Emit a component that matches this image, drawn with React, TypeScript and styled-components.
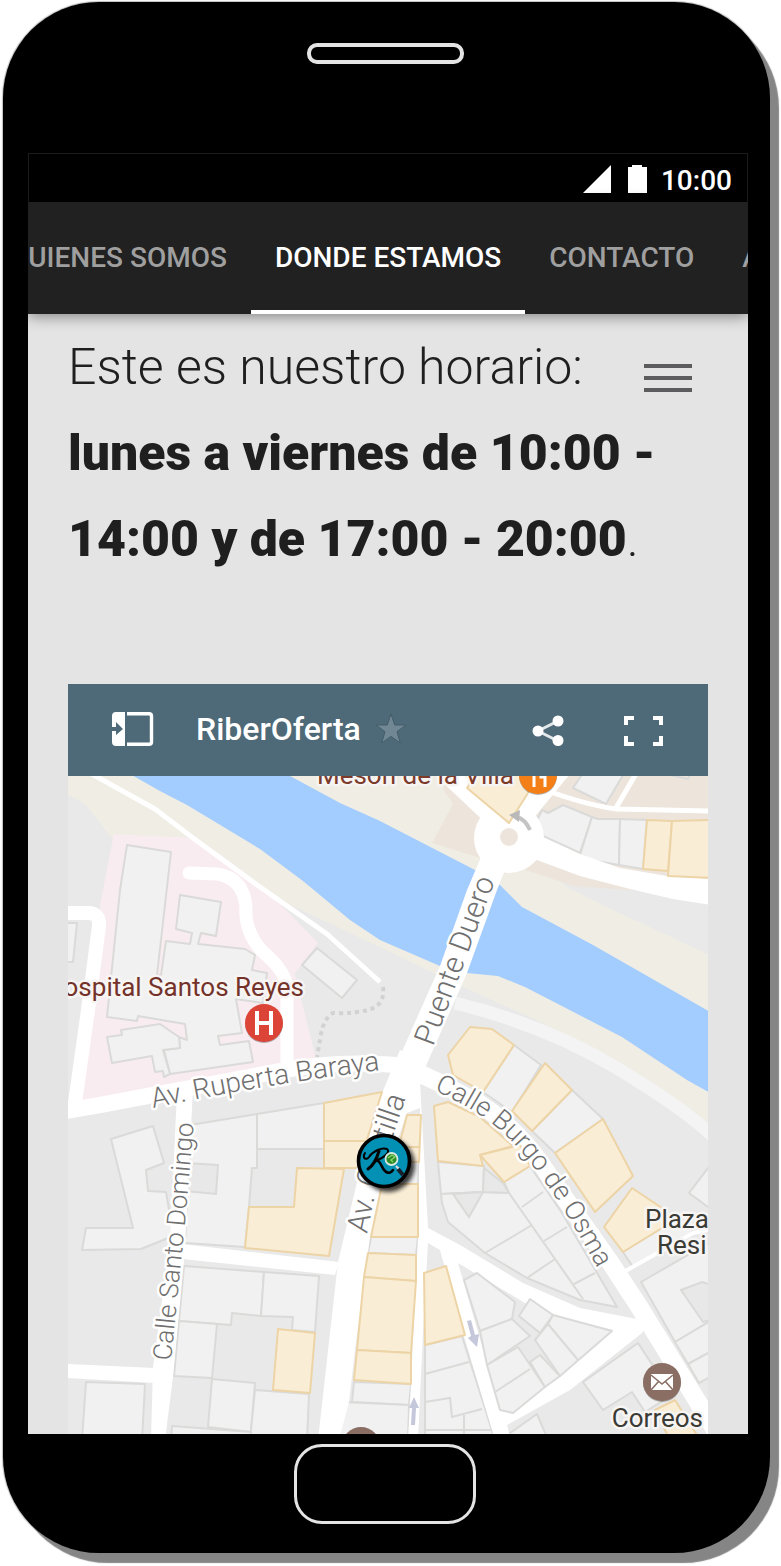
import React from "react";
import styled, { createGlobalStyle } from "styled-components";

const GlobalStyle = createGlobalStyle`
  body {
    margin: 0;
    background: #ffffff;
    font-family: Roboto, "Liberation Sans", sans-serif;
  }
`;

const Phone = styled.div`
  display: flex;
  flex-direction: column;
  align-items: center;
  margin: 2px 11px 0 3px;
  padding: 0 22px 0 25px;
  border-radius: 96px;
  background: #000000;
  box-shadow: 9px 10px 1px #858585, 0 0 1px 1px #bdbdbd;
`;

const Page = styled.div`
  padding-bottom: 13px;
`;

const Speaker = styled.div`
  box-sizing: border-box;
  width: 157px;
  height: 21px;
  margin: 41px 6px 89px 0;
  border: 4px solid #e4e4e4;
  border-radius: 10px;
`;

const HomeButton = styled.button`
  width: 182px;
  height: 80px;
  margin: 10px 6px 29px 0;
  padding: 0;
  border: 3px solid #e4e4e4;
  border-radius: 28px;
  background: #000000;
`;

const Screen = styled.div`
  align-self: stretch;
  display: flex;
  flex-direction: column;
  overflow: hidden;
  background: #e4e4e4;
`;

const StatusBar = styled.div`
  display: flex;
  align-items: center;
  justify-content: flex-end;
  gap: 14px;
  box-sizing: border-box;
  height: 49px;
  padding: 4px 15px 0 0;
  border: 1px solid #1c1c1c;
  border-bottom: 0;
  background: #000000;
  color: #ffffff;
  font-size: 28px;
  font-weight: 500;
`;

const Tabs = styled.nav`
  position: relative;
  display: flex;
  height: 112px;
  background: #212121;
  box-shadow: 0 2px 14px rgba(0, 0, 0, 0.45);
`;

const TabTrack = styled.div`
  display: flex;
  margin-left: -43px;
`;

const Tab = styled.a<{ $active?: boolean }>`
  display: flex;
  align-items: center;
  box-sizing: border-box;
  padding: 2px 24px 0;
  border-bottom: 4px solid ${(p) => (p.$active ? "#ffffff" : "transparent")};
  color: ${(p) => (p.$active ? "#ffffff" : "#9f9f9f")};
  font-size: 28px;
  font-weight: 500;
  white-space: nowrap;
  text-decoration: none;
`;

const Content = styled.main`
  position: relative;
  display: flex;
  flex-direction: column;
  gap: 102px;
  padding: 10px 40px 0;
`;

const Schedule = styled.p`
  margin: 0;
  color: #1f1f1f;
  font-size: 50px;
  font-weight: 300;
  line-height: 86px;

  strong {
    font-weight: 900;
  }
`;

const MenuButton = styled.button`
  position: absolute;
  top: 50px;
  right: 56px;
  display: flex;
  flex-direction: column;
  gap: 8px;
  width: 48px;
  padding: 0;
  border: 0;
  background: none;
`;

const MenuBar = styled.span`
  height: 4px;
  background: #5c5b5d;
`;

const MapCard = styled.section`
  display: flex;
  flex-direction: column;
`;

const MapHeader = styled.header`
  display: flex;
  align-items: center;
  box-sizing: border-box;
  height: 92px;
  padding: 0 45px 2px 44px;
  background: #4e6a78;
  color: #ffffff;
`;

const MapTitle = styled.h2`
  margin: 0 14px 0 42px;
  font-size: 32px;
  font-weight: 500;
`;

const IconButton = styled.button<{ $push?: boolean; $gap?: number }>`
  display: flex;
  margin-left: ${(p) => (p.$push ? "auto" : `${p.$gap ?? 0}px`)};
  padding: 0;
  border: 0;
  background: none;
  color: inherit;
`;

const MapView = styled.svg`
  display: block;
  width: 100%;
  height: auto;

  text {
    font-family: Roboto, "Liberation Sans", sans-serif;
    paint-order: stroke;
    stroke-linejoin: round;
    stroke-width: 5px;
  }
`;

const StreetName = styled.text<{ $size: number }>`
  font-size: ${(p) => p.$size}px;
`;

const PlaceName = styled.text`
  font-size: 26px;
`;

const GREY = [
  "127,845 171,852 157,975 161,975 166,941 190,944 192,933 176,929 180,895 221,902 216,936 201,933 198,944 245,949 255,955 252,970 267,973 263,1003 236,999 242,1033 218,1036 220,1045 249,1041 253,1062 170,1074 164,1050 180,1048 179,1037 187,1040 185,1024 138,1016 137,1021 107,1017 120,890",
  "107,1037 122,1035 121,1030 160,1024 179,1037 180,1048 163,1050 170,1074 164,1077 163,1071 155,1072 152,1056 112,1063",
  "317,948 357,980 342,998 302,965",
  "60,923 77,923 73,962 60,962",
  "111,1139 153,1126 164,1163 146,1170 148,1191 166,1192 173,1233 168,1238 141,1249 82,1250 86,1228 133,1228",
  "190,1125 257,1114 257,1168 252,1168 249,1207 245,1247 185,1243",
  "257,1114 324,1103 324,1149 257,1149",
  "184,1266 264,1272 261,1316 232,1313 231,1325 179,1321",
  "264,1272 319,1276 315,1332 292,1330 293,1317 261,1316",
  "179,1321 217,1324 212,1378 174,1376",
  "212,1379 255,1383 251,1432 208,1427",
  "255,1390 309,1394 307,1440 250,1440",
  "172,1426 251,1432 251,1440 171,1440",
  "86,1382 145,1384 142,1440 82,1440",
  "398,1162 419,1162 418,1184 398,1184",
  "371,1237 418,1237 416,1255 368,1253",
  "354,1382 411,1384 409,1405 352,1402",
  "343,1402 409,1405 408,1440 339,1440",
  "514,1045 541,1065 512,1112 483,1092",
  "572,1090 603,1119 555,1153 532,1131",
  "623,1252 662,1228 690,1227 693,1232 633,1267",
  "712,1163 689,1193 712,1210",
  "641,1282 712,1241 712,1320 675,1342",
  "675,1342 712,1320 712,1351 688,1364",
  "688,1364 712,1351 712,1376 699,1383",
  "438,1162 484,1166 483,1192 441,1194",
  "441,1194 483,1192 509,1193 504,1182 530,1166 562,1213 617,1307 580,1300 527,1278 485,1253 448,1222 442,1203",
  "425,1345 462,1336 495,1440 425,1440",
  "583,1382 638,1343 672,1395 645,1412 632,1392 603,1410",
  "506,1436 537,1414 548,1440",
  "532,831 542,810 548,813 563,805 592,817 580,853",
  "592,817 598,819 620,819 619,865 579,858",
  "620,819 647,820 643,869 619,865",
  "573,788 585,770 626,770 606,804",
];

/* the wedge of houses between the two converging streets */
const WEDGE = [
  "464,1280 477,1273 515,1302 512,1319 480,1331",
  "480,1331 512,1319 530,1336 487,1365",
  "487,1365 518,1347 545,1387 513,1413 500,1410",
  "530,1362 540,1355 560,1376 545,1387",
  "519,1316 530,1299 553,1315 540,1333",
  "548,1324 553,1315 612,1331 560,1376 535,1340",
];

const COURTYARDS = [
  "185,1163 218,1165 216,1194 185,1191",
  "453,1194 483,1192 469,1217",
  "484,1168 503,1183 509,1193 483,1192",
  "681,1290 702,1282 712,1285 712,1320 703,1322",
];

const YELLOW = [
  "324,1103 382,1092 358,1168 324,1168",
  "297,1168 344,1169 329,1256 245,1248 249,1207 294,1207",
  "278,1329 315,1333 310,1393 273,1390",
  "407,1115 421,1115 419,1162 395,1162",
  "382,1184 418,1184 418,1237 371,1237",
  "368,1253 416,1255 416,1281 364,1277",
  "364,1277 416,1281 411,1353 357,1350",
  "357,1350 411,1353 411,1384 354,1380",
  "470,1027 492,1029 514,1045 483,1092 453,1075 448,1055",
  "545,1063 572,1090 532,1131 512,1111",
  "603,1119 633,1176 595,1212 555,1153",
  "632,1188 665,1210 662,1228 623,1252 604,1227",
  "434,1106 448,1102 480,1117 513,1146 480,1155 483,1166 438,1161",
  "480,1155 520,1145 530,1166 504,1182",
  "424,1273 446,1266 465,1335 425,1345",
  "675,1400 655,1410 670,1440 700,1440",
  "467,788 478,770 536,770 528,793 509,823",
  "647,820 672,821 668,871 643,869",
  "672,821 712,820 712,878 668,876",
];

const WHITE_ROADS = [
  "482,855 467,890 440,966 400,1056 425,1068 467,973 497,890 505,870",
  "400,1050 380,1098 358,1178 338,1262 318,1440 339,1440 349,1402 355,1350 370,1237 382,1184 407,1113 420,1108 418,1237 411,1383 408,1440 418,1440 423,1333 428,1243 440,1250 463,1333 495,1440 511,1440 507,1425 570,1390 642,1333 650,1320 637,1319 580,1308 523,1283 490,1263 460,1245 428,1228 421,1100 420,1080 425,1062",
  "177,1092 193,1088 187,1210 184,1260 173,1377 165,1440 151,1440 153,1367 170,1243",
  "182,1244 339,1262 335,1275 182,1259",
  "66,1364 155,1368 155,1383 66,1378",
  "530,831 580,854 620,868 667,876 712,879 712,905 673,899 630,889 580,876 537,860 520,868",
];

const LINES = [
  "509,1193 583,1299",
  "522,1207 543,1192",
  "485,1253 532,1225",
  "544,1241 567,1227",
  "527,1278 555,1259",
  "574,1284 595,1273",
  "425,1374 469,1362",
  "425,1402 450,1398 452,1417 482,1409",
  "464,1415 464,1440",
  "425,1430 493,1430",
  "670,775 688,779 690,775",
];

const RIVER =
  "290,776 340,803 380,821 475,870 498,883 522,907 593,945 712,1013 712,1094 687,1080 622,1037 525,987 498,976 467,973 440,966 380,940 350,920 303,881 260,849 187,805 160,791 130,774";

const StreetMap = () => (
  <MapView viewBox="68 776 640 658" role="img" aria-label="Mapa de RiberOferta">
    <defs>
      <path id="ruperta" d="M153 1108 Q265 1084 390 1069" />
      <path id="puente" d="M433 1047 L502 862" />
      <path id="domingo" d="M171 1361 L185 1223 L195 1110" />
      <path id="castilla" d="M367 1234 L378 1180 L418 1062" />
      <path id="burgo" d="M434 1090 C470 1107 495 1122 518 1148 C550 1185 575 1225 608 1288" />
      <filter id="soft" x="-30%" y="-30%" width="160%" height="160%">
        <feGaussianBlur stdDeviation="2" />
      </filter>
    </defs>

    {/* ground, banks and river */}
    <rect x="68" y="776" width="640" height="658" fill="#e9e9e9" />
    <polygon
      fill="#efede4"
      points="60,770 450,770 537,861 567,887 613,910 712,956 712,1130 623,1070 547,1025 458,985 390,952 310,914 240,882 187,850 113,839 85,804 60,790"
    />
    <polygon fill="#ede5db" points="450,770 443,789 453,804 432,843 480,858 523,869 573,886 613,889 712,895 712,770" />
    <polygon fill="#a3ccff" points={RIVER} />
    <polygon
      fill="#f9ecf0"
      stroke="#f9ecf0"
      strokeWidth="3"
      strokeLinejoin="round"
      points="115,836 187,839 240,873 280,906 316,943 293,973 314,1057 83,1102 102,903"
    />
    <path d="M455 1003 Q545 1025 615 1067 T715 1138" fill="none" stroke="#f4f4f4" strokeWidth="13" />

    {/* buildings */}
    <g fill="#f1f1f1" stroke="#dadad9" strokeWidth="2" strokeLinejoin="round">
      {GREY.map((p) => (
        <polygon key={p} points={p} />
      ))}
    </g>
    <g fill="#e8e8e8" stroke="#dadad9" strokeWidth="2">
      {COURTYARDS.map((p) => (
        <polygon key={p} points={p} />
      ))}
    </g>
    <g fill="none" stroke="#dadad9" strokeWidth="2">
      {LINES.map((p) => (
        <polyline key={p} points={p} />
      ))}
    </g>

    {/* roads */}
    <g fill="#ffffff">
      {WHITE_ROADS.map((p) => (
        <polygon key={p} points={p} />
      ))}
      <circle cx="509" cy="838" r="35" />
    </g>
    <polygon fill="#e9e9e9" points="458,1263 525,1303 557,1316 613,1330 545,1387 513,1413 500,1410 487,1363" />
    <g fill="#f1f1f1" stroke="#dadad9" strokeWidth="2" strokeLinejoin="round">
      {WEDGE.map((p) => (
        <polygon key={p} points={p} />
      ))}
      <polyline fill="none" points="495,1392 530,1369" />
      <polyline fill="none" points="548,1324 578,1360" />
    </g>
    <g fill="none" stroke="#ffffff" strokeLinejoin="round">
      <path d="M60 1112 L100 1105 L280 1071 Q340 1059 410 1066" strokeWidth="16" />
      <path d="M60 913 H88 Q100 913 99 926 L88 1010 L74 1110" strokeWidth="14" />
      <path d="M189 873 L217 874 Q243 878 246 906 Q244 932 263 952 Q287 972 287 990 V1070" strokeWidth="13" strokeLinecap="round" />
      <path d="M90 773 L155 809 L193 838 L260 887 L327 934 L380 982" strokeWidth="5" />
      <path d="M412 1070 L440 1083 L480 1104 Q522 1132 552 1180 L610 1262 L640 1308 L720 1438" strokeWidth="18" />
      <path d="M442 768 L495 818" strokeWidth="20" />
      <path d="M515 825 L562 768" strokeWidth="20" />
      <path d="M545 790 Q590 806 617 809 L712 811 M637 772 L616 808" strokeWidth="5" />
      <path d="M622 1273 L693 1233 L712 1229" strokeWidth="4" />
    </g>
    <g fill="#f9edd6" stroke="#edd4a6" strokeWidth="2" strokeLinejoin="round">
      {YELLOW.map((p) => (
        <polygon key={p} points={p} />
      ))}
      <path fill="none" d="M324 1141 H368 M400 1147 H420" />
    </g>
    <circle cx="509" cy="837" r="9" fill="#ede5db" />
    <path
      d="M383 987 Q385 1004 371 1009 Q356 1014 333 1013 Q324 1018 321 1034 L317 1057"
      fill="none"
      stroke="#d2d2d2"
      strokeWidth="4"
      strokeDasharray="4 4"
    />

    {/* one-way arrows */}
    <path d="M530 830 Q525 819 517 817" fill="none" stroke="#c4c4c4" strokeWidth="4" />
    <polygon fill="#b9b9b9" points="509,815 520,810 519,822" />
    <g fill="#c5c8db">
      <polygon points="467,1321 471,1320 475,1335 479,1334 477,1347 468,1338 471,1336" />
      <polygon points="411,1425 415,1425 416,1408 419,1408 414,1397 409,1408 412,1408" />
    </g>

    {/* street names */}
    <g fill="#707070" stroke="#ffffff" fontWeight="300">
      <StreetName $size={28}><textPath href="#ruperta">Av. Ruperta Baraya</textPath></StreetName>
      <StreetName $size={30}><textPath href="#puente">Puente Duero</textPath></StreetName>
      <StreetName $size={26}><textPath href="#domingo">Calle Santo Domingo</textPath></StreetName>
      <StreetName $size={30}><textPath href="#castilla">Av. Castilla</textPath></StreetName>
      <StreetName $size={27}><textPath href="#burgo">Calle Burgo de Osma</textPath></StreetName>
    </g>

    {/* places */}
    <g stroke="#f7f5f3">
      <PlaceName x="304" y="996" textAnchor="end" fill="#74332a">Hospital Santos Reyes</PlaceName>
      <PlaceName x="514" y="784" textAnchor="end" fill="#7c3a2b">Mesón de la Villa</PlaceName>
      <PlaceName x="645" y="1228" fill="#3b3b36">Plaza</PlaceName>
      <PlaceName x="657" y="1254" fill="#3b3b36">Resi</PlaceName>
      <PlaceName x="703" y="1427" textAnchor="end" fill="#3b3b36">Correos</PlaceName>
    </g>
    <g fill="#000000" opacity="0.3">
      <circle cx="264" cy="1024" r="19" />
      <circle cx="538" cy="776" r="19" />
      <circle cx="662" cy="1383" r="19" />
    </g>
    <circle cx="264" cy="1023" r="19" fill="#dc4437" />
    <path d="M257 1011 V1035 M271 1011 V1035 M257 1023 H271" stroke="#ffffff" strokeWidth="4" fill="none" />
    <circle cx="538" cy="775" r="19" fill="#f57f17" />
    <path d="M534 787 V770 M545 787 V777 H541 V770" stroke="#ffffff" strokeWidth="3" fill="none" />
    <circle cx="662" cy="1382" r="19" fill="#8b6e63" />
    <rect x="651" y="1374" width="22" height="16" fill="#ffffff" />
    <path d="M651 1375 L662 1384 L673 1375 M651 1390 L659 1381 M673 1390 L665 1381" stroke="#8b6e63" strokeWidth="1.6" fill="none" />
    <circle cx="361" cy="1446" r="19" fill="#8b6e63" />

    {/* shop marker */}
    <circle cx="388" cy="1165" r="27" fill="#000000" opacity="0.75" filter="url(#soft)" />
    <circle cx="384" cy="1161" r="25.5" fill="#0290b5" stroke="#000000" strokeWidth="3.6" />
    <g fill="none" stroke="#000000" strokeLinecap="round" strokeLinejoin="round">
      <path d="M365 1153 C362 1158 366 1161 369 1157 C373 1151 382 1147 387 1149 C391 1152 384 1158 375 1161" strokeWidth="2" />
      <path d="M379 1151 C377 1158 374 1165 368 1169" strokeWidth="3" />
      <path d="M375 1161 C381 1159 381 1168 385 1171 C388 1174 391 1173 393 1170" strokeWidth="2.6" />
    </g>
    <path d="M396 1166 L399 1169" stroke="#d8d8d8" strokeWidth="2.4" />
    <path d="M398 1169 L403 1175" stroke="#17202a" strokeWidth="4" />
    <circle cx="391.5" cy="1159" r="6" fill="#2c8b28" stroke="#d9e8df" strokeWidth="1.8" />
    <path d="M388 1158 L392 1155 L395 1157 L391 1160 L393 1162" fill="none" stroke="#8ad36b" strokeWidth="1.4" />
  </MapView>
);

export default function App() {
  return (
    <Page>
      <GlobalStyle />
      <Phone>
        <Speaker />
        <Screen>
          <StatusBar>
            <svg width="64" height="30" viewBox="0 0 64 30" fill="#ffffff" aria-hidden="true">
              <path d="M28 0 V28 H0 Z" />
              <path d="M45 2 H49 V0 H59 V2 H64 V28 H45 Z" />
            </svg>
            <span>10:00</span>
          </StatusBar>
          <Tabs>
            <TabTrack>
              <Tab href="#quienes">QUIENES SOMOS</Tab>
              <Tab href="#donde" $active>DONDE ESTAMOS</Tab>
              <Tab href="#contacto">CONTACTO</Tab>
              <Tab href="#a">A</Tab>
            </TabTrack>
          </Tabs>
          <Content>
            <Schedule>
              Este es nuestro horario:
              <br />
              <strong>lunes a viernes de 10:00 - 14:00 y de 17:00 - 20:00</strong>.
            </Schedule>
            <MenuButton aria-label="Menú">
              <MenuBar />
              <MenuBar />
              <MenuBar />
            </MenuButton>
            <MapCard>
              <MapHeader>
                <IconButton aria-label="Abrir panel">
                  <svg width="42" height="34" viewBox="0 0 42 34">
                    <path fill="#ffffff" d="M4 0 H13 V34 H4 Q0 34 0 30 V19 H4 V23 L11 17 L4 10 V15 H0 V4 Q0 0 4 0 Z" />
                    <path fill="none" stroke="#ffffff" strokeWidth="3.4" d="M15 1.7 H37 Q39.5 1.7 39.5 4 V30 Q39.5 32.3 37 32.3 H15" />
                  </svg>
                </IconButton>
                <MapTitle>RiberOferta</MapTitle>
                <IconButton aria-label="Favorito">
                  <svg width="32" height="32" viewBox="0 0 32 32">
                    <path
                      d="M16 1 L19.7 12 L31 12 L22 18.7 L25.3 30 L16 23.4 L6.7 30 L10 18.7 L1 12 L12.3 12 Z"
                      fill="#718894"
                      stroke="#435d6b"
                      strokeWidth="1"
                    />
                  </svg>
                </IconButton>
                <IconButton aria-label="Compartir" $push>
                  <svg width="32" height="34" viewBox="0 0 32 34" fill="#ffffff">
                    <path d="M26 9 L6 19 L26 29" fill="none" stroke="#e3e8ea" strokeWidth="3" />
                    <circle cx="6" cy="19" r="5.5" />
                    <circle cx="26" cy="9" r="5.5" />
                    <circle cx="26" cy="28.5" r="5.5" />
                  </svg>
                </IconButton>
                <IconButton aria-label="Pantalla completa" $gap={60}>
                  <svg width="39" height="34" viewBox="0 0 39 34">
                    <path
                      d="M10 6 H2 V13 M29 6 H37 V13 M2 24 V32 H10 M37 24 V32 H29"
                      fill="none"
                      stroke="#ffffff"
                      strokeWidth="4"
                    />
                  </svg>
                </IconButton>
              </MapHeader>
              <StreetMap />
            </MapCard>
          </Content>
        </Screen>
        <HomeButton aria-label="Inicio" />
      </Phone>
    </Page>
  );
}
